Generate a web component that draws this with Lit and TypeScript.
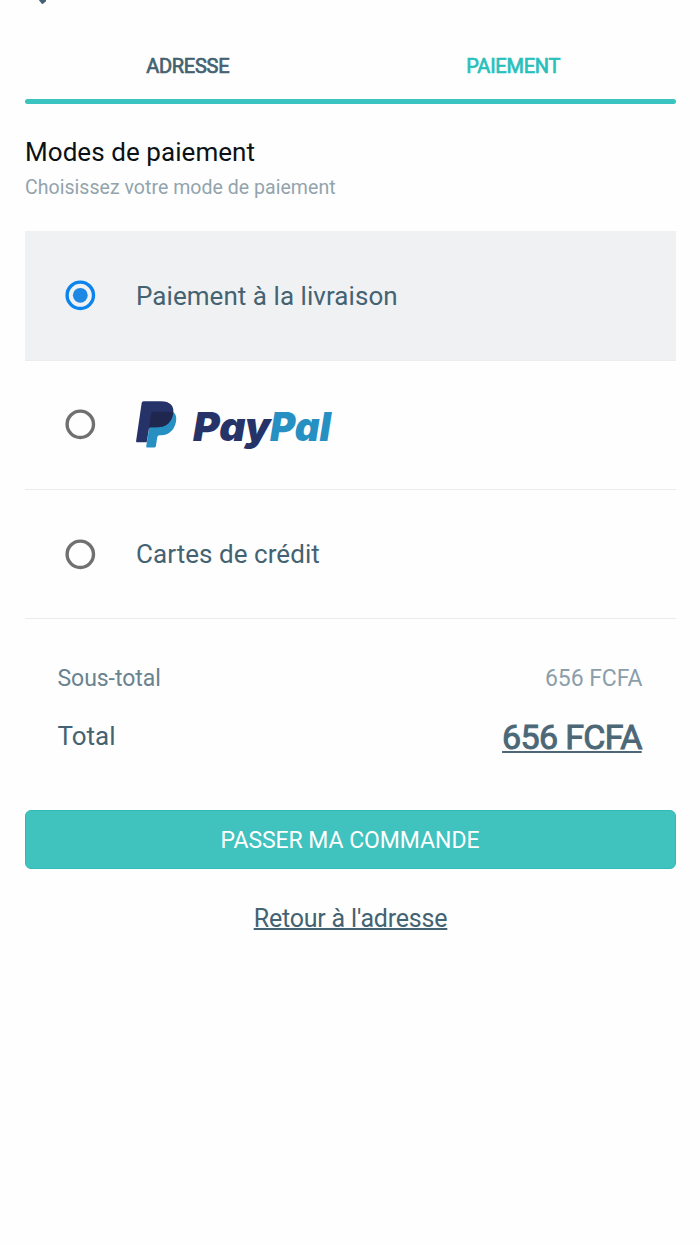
import { LitElement, html, svg, css } from "lit";
import { customElement, property, state } from "lit/decorators.js";

const paypalLogo = svg`
  <svg class="paypal" width="200" height="52" viewBox="0 0 200 52" role="img">
    <path fill="#2790c3" d="M16 11H37.2C40 13.200 40.800 16.300 40 20.500C38.500 28.700 33.500 34 25 34.300H23.500Q21.600 34.300 21.300 36L19.900 45Q19.700 46.600 18.200 46.600H11.200Q10 46.600 10.200 45.300Z"/>
    <path fill="#253368" d="M7.600 0.200H25C34 0.200 38.600 5 37.200 12.500C35.600 21.500 30.200 26.300 21 26.300H14.800Q13.200 26.300 12.900 28L10.700 41.200H1Q-.1 41.200 .1 40L5.700 1.800Q6 .2 7.600 .2Z"/>
    <path fill="#20274f" d="M17 10.800H35Q36.700 10.800 37.300 11.800C35.800 21.500 30.200 26.300 21 26.300H14.800Q13.200 26.300 12.900 27.500L15.100 12.500Q15.400 10.800 17 10.800Z"/>
    <text class="word" x="57" y="40" textLength="77.500" lengthAdjust="spacingAndGlyphs" fill="#253368">Pay</text>
    <text class="word" x="134" y="40" textLength="61" lengthAdjust="spacingAndGlyphs" fill="#2790c3">Pal</text>
  </svg>`;

@customElement("payment-option")
export class PaymentOption extends LitElement {
  @property({ type: Boolean, reflect: true }) selected = false;

  static styles = css`
    :host {
      display: flex;
      align-items: center;
      box-sizing: border-box;
      height: 129.300px;
      padding-left: 40px;
      border-bottom: 1.300px solid #ebecee;
      cursor: pointer;
    }
    :host([selected]) { background: #f0f1f3; }
    .radio { display: block; flex: none; margin-right: 40px; }
    .ring { fill: none; stroke: #707070; stroke-width: 3.400; }
    .dot { fill: #1e88e5; }
    :host([selected]) .ring { stroke: #0b84ee; }
  `;

  render() {
    return html`
      <svg class="radio" width="31" height="31" viewBox="0 0 31 31">
        <circle class="ring" cx="15.300" cy="15.300" r="13.200"></circle>
        ${this.selected ? svg`<circle class="dot" cx="15.300" cy="15.300" r="7.400"></circle>` : ""}
      </svg>
      <slot></slot>
    `;
  }
}

@customElement("app-root")
export class AppRoot extends LitElement {
  @state() private method = "cod";

  static styles = css`
    :host {
      display: block;
      box-sizing: border-box;
      width: 100%;
      height: 1244px;
      padding: 0 24px 0 25px;
      overflow: hidden;
      background: #fefefe;
      color: #446372;
      font-family: Roboto, "Liberation Sans", sans-serif;
    }
    .top { height: 32px; }
    .back { display: block; margin-left: 12px; }
    .tabs {
      display: grid;
      grid-template-columns: 1fr 1fr;
      height: 66.500px;
      text-align: center;
      font-size: 20px;
      line-height: 68px;
    }
    .rule { height: 5.500px; border-radius: 3px; background: #3bc3bf; }
    .tab { -webkit-text-stroke: 0.700px currentColor; letter-spacing: -0.250px; }
    .tab.active { color: #29c0bb; }
    .title { margin: 32px 0 0; font-size: 26px; font-weight: 400; line-height: 32px; letter-spacing: 0.060px; color: #0b1216; }
    .hint { margin: 8px 0 31.400px; font-size: 19.500px; line-height: 24px; letter-spacing: 0.040px; color: #92a4ad; }
    .label { font-size: 26px; letter-spacing: 0.050px; }
    .paypal { display: block; overflow: visible; margin-top: 5px; }
    .word { font: italic 900 40px Inter, sans-serif; font-feature-settings: "cv11" 1; }
    .totals {
      display: grid;
      grid-template-columns: auto auto;
      justify-content: space-between;
      align-items: center;
      padding: 42.600px 33.500px 0 32.500px;
    }
    .totals > :nth-child(even) { text-align: right; }
    .sub { font-size: 23px; line-height: 34px; letter-spacing: -0.050px; color: #6b838f; }
    .muted { color: #8b9eaa; }
    .total { font-size: 26px; line-height: 80px; margin-top: -2px; }
    .amount { font-size: 34px; line-height: 82px; letter-spacing: -0.650px; margin-right: 0.800px; -webkit-text-stroke: 1px currentColor; color: #4c6877; text-decoration: underline; text-decoration-thickness: 2px; text-underline-offset: 2px; }
    .cta {
      display: block;
      width: 100%;
      height: 59px;
      margin-top: 32px;
      border: 1px solid #2fbcb8;
      border-radius: 6px;
      background: #40c2be;
      color: #fff;
      font: 400 23px/57px Roboto, sans-serif;
      letter-spacing: -0.060px;
      padding: 1px 1px 0 0;
    }
    .return { display: block; margin: 35px auto 0; width: max-content; font-size: 25px; line-height: 30px; letter-spacing: -0.200px; color: #446372; text-decoration-thickness: 1.500px; }
  `;

  private option(id: string, content: unknown) {
    return html`<payment-option ?selected=${this.method === id} @click=${() => (this.method = id)}>${content}</payment-option>`;
  }

  render() {
    return html`
      <div class="top">
        <svg class="back" width="12" height="5" viewBox="0 0 12 5"><path d="M1.800 0H9V1.200L5.800 4Q5.300 4.300 4.800 3.800Z" fill="#446372"></path></svg>
      </div>
      <nav class="tabs">
        <span class="tab">ADRESSE</span>
        <span class="tab active">PAIEMENT</span>
      </nav>
      <div class="rule"></div>
      <h1 class="title">Modes de paiement</h1>
      <p class="hint">Choisissez votre mode de paiement</p>
      <section>
        ${this.option("cod", html`<span class="label">Paiement à la livraison</span>`)}
        ${this.option("paypal", paypalLogo)}
        ${this.option("card", html`<span class="label">Cartes de crédit</span>`)}
      </section>
      <section class="totals">
        <span class="sub">Sous-total</span><span class="sub muted">656 FCFA</span>
        <span class="total">Total</span><span class="amount">656 FCFA</span>
      </section>
      <button class="cta">PASSER MA COMMANDE</button>
      <a class="return" href="#">Retour à l'adresse</a>
    `;
  }
}
